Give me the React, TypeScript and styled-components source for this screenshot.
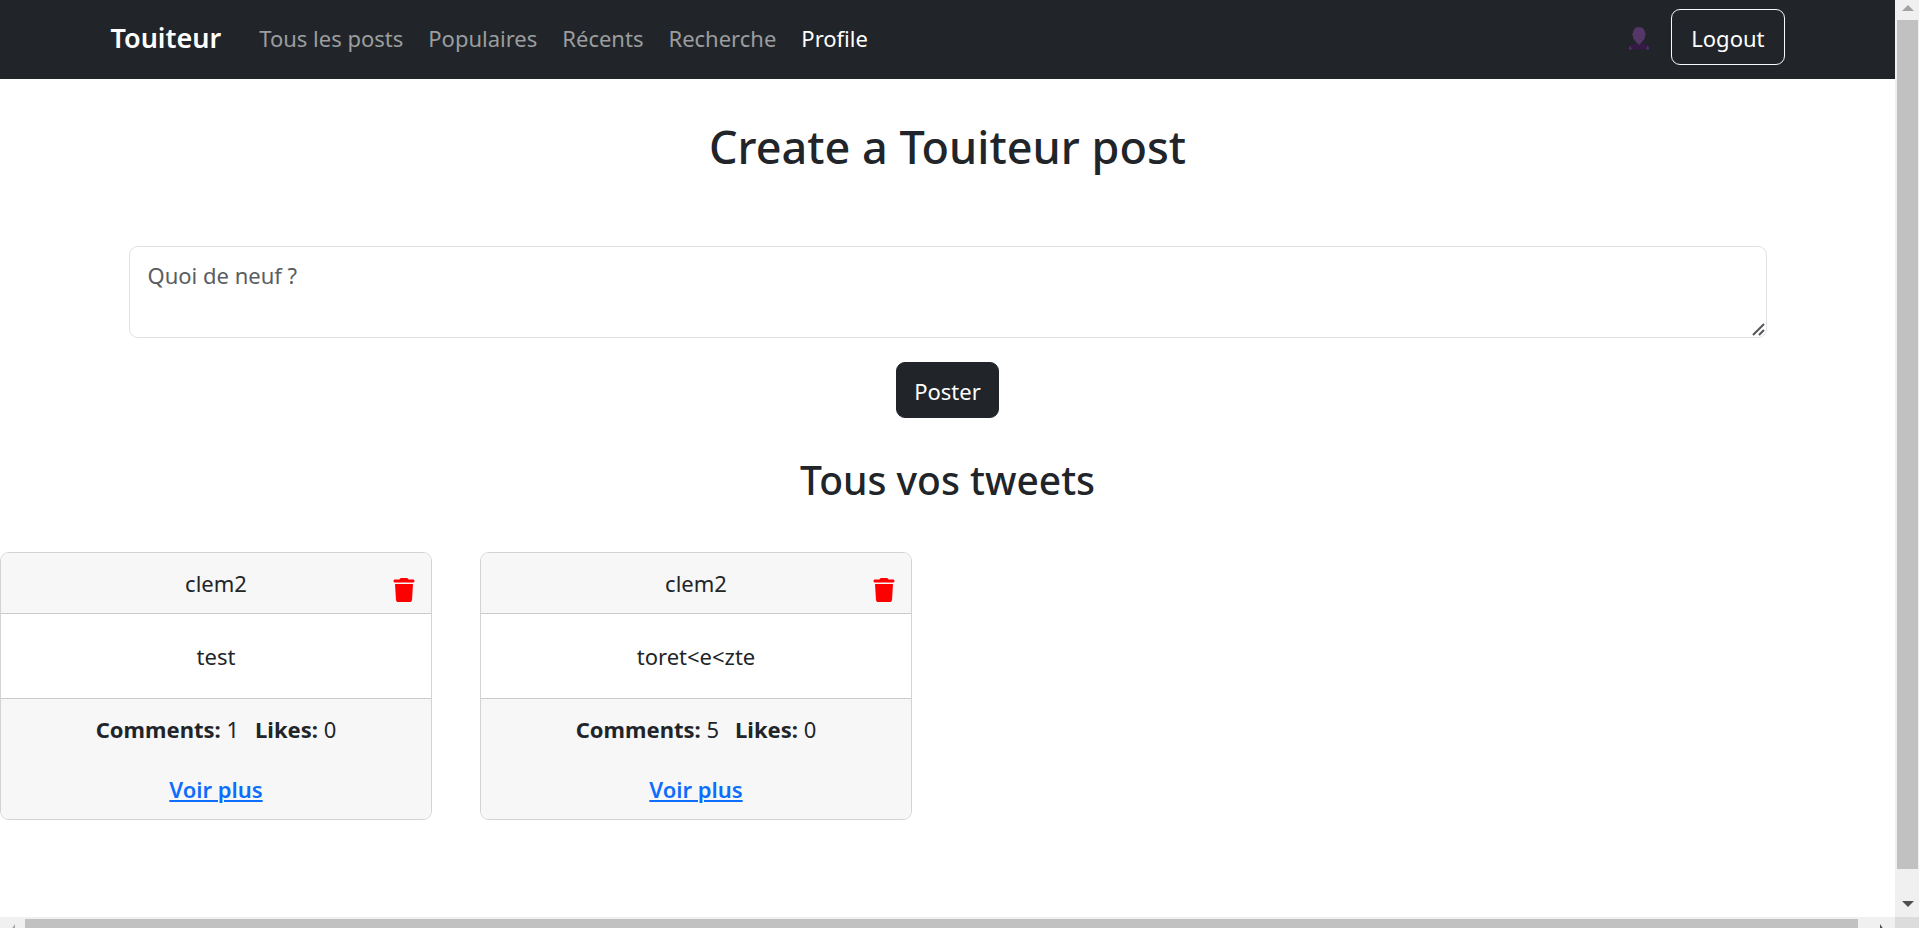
import React from "react";
import styled, { createGlobalStyle } from "styled-components";
import { FaTrash } from "react-icons/fa6";

const GlobalStyle = createGlobalStyle`
  *, *::before, *::after { box-sizing: border-box; }
  body {
    margin: 0;
    background: #fff;
    color: #212529;
    font-family: "Segoe UI", "Noto Sans", "Open Sans", sans-serif;
    font-size: 22px;
    line-height: 36px;
  }
  button, textarea { font: inherit; }
`;

const Frame = styled.div`
  display: grid;
  grid-template-columns: minmax(0, 1fr) 24px;
  grid-template-rows: minmax(0, 1fr) 11px;
  height: 100vh;
`;

const Page = styled.div`
  overflow: hidden;
`;

const Container = styled.div`
  max-width: 1710px;
  margin: 0 auto;
  padding: 0 18px;
`;

const Navbar = styled.header`
  background: #212529;
  padding: 9px 0 14px;
`;

const NavRow = styled(Container)`
  display: flex;
  align-items: center;
`;

const Brand = styled.a`
  margin-right: 38px;
  padding-top: 2px;
  color: #fff;
  font-size: 27px;
  font-weight: 600;
  text-decoration: none;
`;

const NavLinks = styled.nav`
  display: flex;
  flex: 1;
  gap: 25px;
  padding-top: 2px;
`;

const NavLink = styled.a<{ $active?: boolean }>`
  color: ${({ $active }) => ($active ? "#fff" : "#9b9d9f")};
  text-decoration: none;
`;

const Avatar = styled.svg`
  margin: 2px 20px 0 0;
`;

const Button = styled.button<{ $outline?: boolean }>`
  height: 56px;
  padding: 2px ${({ $outline }) => ($outline ? "19px" : "17px")} 0;
  border: 1px solid ${({ $outline }) => ($outline ? "#f8f9fa" : "#212529")};
  border-radius: 9px;
  background: #212529;
  color: #fff;
  cursor: pointer;
`;

const Title = styled.h1`
  margin: 38px 0 69px;
  font-size: 45px;
  font-weight: 500;
  line-height: 60px;
  text-align: center;
`;

const PostForm = styled.form`
  display: flex;
  flex-direction: column;
  align-items: center;
  gap: 24px;
  padding: 0 18px;
`;

const InputWrap = styled.div`
  position: relative;
  width: 100%;
`;

const PostInput = styled.textarea`
  display: block;
  width: 100%;
  height: 92px;
  padding: 10px 18px;
  border: 1px solid #dee2e6;
  border-radius: 9px;
  outline: none;
  color: #212529;
  line-height: 36px;
  resize: none;
  &::placeholder { color: #5a5d61; opacity: 1; }
`;

const Grip = styled.svg`
  position: absolute;
  right: 2px;
  bottom: 2px;
`;

const Subtitle = styled.h2`
  margin: 36px 0 46px;
  font-size: 39px;
  font-weight: 500;
  line-height: 52px;
  text-align: center;
`;

const Cards = styled.section`
  display: flex;
  flex-wrap: wrap;
  gap: 48px;
`;

const Card = styled.article`
  width: 432px;
  border: 1px solid #d3d3d4;
  border-radius: 9px;
  overflow: hidden;
  text-align: center;
`;

const CardHeader = styled.header`
  position: relative;
  padding: 12px 24px;
  border-bottom: 1px solid #cbcbcc;
  background: #f7f7f7;
`;

const DeleteButton = styled.button`
  position: absolute;
  top: 25px;
  right: 15px;
  display: flex;
  padding: 0;
  border: 0;
  background: none;
  color: red;
  font-size: 24px;
  cursor: pointer;
`;

const CardBody = styled.p`
  margin: 0;
  padding: 24px;
`;

const CardFooter = styled.footer`
  padding: 12px 24px;
  border-top: 1px solid #cbcbcc;
  background: #f7f7f7;
`;

const Stats = styled.p`
  display: flex;
  justify-content: center;
  gap: 16px;
  margin: 0 0 24px;
`;

const MoreLink = styled.a`
  color: #0d6efd;
  font-weight: 600;
  text-decoration-thickness: 2px;
  text-underline-offset: 2px;
`;

const VerticalBar = styled.div`
  display: flex;
  flex-direction: column;
  align-items: center;
  padding: 5px 1px 10px 2px;
  background: #f0f0f0;
`;

const VerticalThumb = styled.div`
  flex: 1;
  align-self: stretch;
  margin: 9px 0 32px;
  background: #c1c1c1;
`;

const HorizontalBar = styled.div`
  display: flex;
  padding: 2px 11px 0;
  background: #f0f0f0;
  overflow: hidden;
`;

const HorizontalThumb = styled.div`
  flex: 1;
  margin: 0 22px 0 10px;
  background: #c1c1c1;
`;

const SideArrow = styled.svg`
  margin-top: 5px;
`;

const Corner = styled.div`
  background: #dcdcdc;
`;

const links = ["Tous les posts", "Populaires", "Récents", "Recherche", "Profile"];

const posts = [
  { id: 1, author: "clem2", text: "test", comments: 1, likes: 0 },
  { id: 2, author: "clem2", text: "toret<e<zte", comments: 5, likes: 0 },
];

export default function App() {
  return (
    <>
      <GlobalStyle />
      <Frame>
        <Page>
          <Navbar>
            <NavRow>
              <Brand href="#">Touiteur</Brand>
              <NavLinks>
                {links.map((label) => (
                  <NavLink key={label} href="#" $active={label === "Profile"}>
                    {label}
                  </NavLink>
                ))}
              </NavLinks>
              <Avatar width="24" height="24" viewBox="0 0 24 24" aria-hidden="true">
                <path d="M1.500 23.500c0-3 1-4.500 3-5l4-1.300 3.500 2.300 3.500-2.300 4 1.300c2 .5 3 2 3 5z" fill="#341a45" />
                <path d="M2 23.500c0-2 .5-3 1.500-3.500l1.500 3.500zM22 23.500c0-2-.5-3-1.500-3.500l-1.500 3.500z" fill="#4f3562" />
                <path d="M12 1c-4 0-6 3-6 6-1 0-1 2 0 3 0 3 1 4 3 5.500v.5l3 3 3-3v-.5c2-1.500 3-2.500 3-5.500 1-1 1-3 0-3 0-3-2-6-6-6z" fill="#543667" />
              </Avatar>
              <Button $outline>Logout</Button>
            </NavRow>
          </Navbar>
          <main>
            <Container>
              <Title>Create a Touiteur post</Title>
              <PostForm onSubmit={(e) => e.preventDefault()}>
                <InputWrap>
                  <PostInput aria-label="Quoi de neuf ?" placeholder="Quoi de neuf ?" />
                  <Grip width="13" height="13" viewBox="0 0 13 13" aria-hidden="true">
                    <path d="M1 12L12 1M7 12l5-5" stroke="#55565a" strokeWidth="2" />
                  </Grip>
                </InputWrap>
                <Button type="submit">Poster</Button>
              </PostForm>
              <Subtitle>Tous vos tweets</Subtitle>
            </Container>
            <Cards>
              {posts.map((post) => (
                <Card key={post.id}>
                  <CardHeader>
                    {post.author}
                    <DeleteButton aria-label="Supprimer">
                      <FaTrash />
                    </DeleteButton>
                  </CardHeader>
                  <CardBody>{post.text}</CardBody>
                  <CardFooter>
                    <Stats>
                      <span><strong>Comments:</strong> {post.comments}</span>
                      <span><strong>Likes:</strong> {post.likes}</span>
                    </Stats>
                    <MoreLink href="#">Voir plus</MoreLink>
                  </CardFooter>
                </Card>
              ))}
            </Cards>
          </main>
        </Page>
        <VerticalBar aria-hidden="true">
          <svg width="12" height="6" viewBox="0 0 12 6"><path d="M0 6L6 0l6 6z" fill="#a3a3a3" /></svg>
          <VerticalThumb />
          <svg width="12" height="6" viewBox="0 0 12 6"><path d="M0 0h12L6 6z" fill="#505050" /></svg>
        </VerticalBar>
        <HorizontalBar aria-hidden="true">
          <SideArrow width="4" height="12" viewBox="0 0 4 12"><path d="M4 0v12L0 6z" fill="#a3a3a3" /></SideArrow>
          <HorizontalThumb />
          <SideArrow width="4" height="12" viewBox="0 0 4 12"><path d="M0 0v12l4-6z" fill="#505050" /></SideArrow>
        </HorizontalBar>
        <Corner />
      </Frame>
    </>
  );
}
